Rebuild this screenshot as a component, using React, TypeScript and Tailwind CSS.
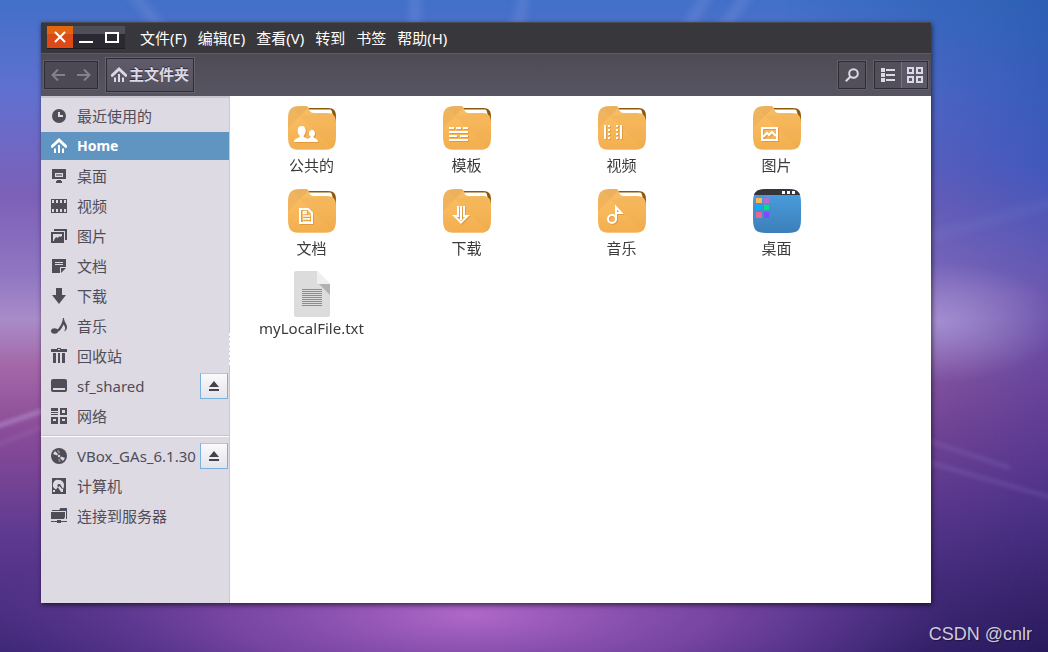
import { useState } from 'react';
import type { ReactNode } from 'react';
import clsx from 'clsx';

const menuItems = ['文件(F)', '编辑(E)', '查看(V)', '转到', '书签', '帮助(H)'];

interface Place {
  id: string;
  label: string;
  icon: ReactNode;
  ejectable?: boolean;
}

/* Sidebar icons, all drawn on a 16x16 grid */
function Glyph({ children }: { children: ReactNode }) {
  return (
    <svg viewBox="0 0 16 16" className="size-4 shrink-0" fill="currentColor" aria-hidden="true">
      {children}
    </svg>
  );
}

const HomeIcon = () => (
  <Glyph>
    <path d="M8 0 16 7.5V9.5L14.5 10 8 4 1.5 10 0 9.5V7.5Z" />
    <path d="M3 10.5h2V15H3zM7 7h2v8H7zM11 10.5h2V15h-2z" />
  </Glyph>
);

const LIGHT = '#dddae3';

const places: Place[] = [
  {
    id: 'recent',
    label: '最近使用的',
    icon: (
      <Glyph>
        <circle cx="8" cy="8" r="7" />
        <path d="M7 4h2v3h3v2H7z" fill={LIGHT} />
      </Glyph>
    ),
  },
  { id: 'home', label: 'Home', icon: <HomeIcon /> },
  {
    id: 'desktop',
    label: '桌面',
    icon: (
      <Glyph>
        <path d="M1 1h14v10H1zM6 12h4v1h1v2H5v-2h1z" />
        <path d="M4 5h8v4H4z" fill={LIGHT} />
        <path d="M5 6h6v2H5z" fill="#8d8a96" />
      </Glyph>
    ),
  },
  {
    id: 'videos',
    label: '视频',
    icon: (
      <Glyph>
        <path d="M0 1h16v14H0z" />
        <path d="M1 2h2v3H1zM5 2h2v3H5zM9 2h2v3H9zM13 2h2v3h-2zM1 11h2v3H1zM5 11h2v3H5zM9 11h2v3H9zM13 11h2v3h-2z" fill={LIGHT} />
      </Glyph>
    ),
  },
  {
    id: 'pictures',
    label: '图片',
    icon: (
      <Glyph>
        <path d="M3 1h13v11h-2V3H3z" />
        <path d="M0 4h13v11H0z" />
        <path d="M2 6h9v2L9 9 8 8 7 10 5 9 3 12v1H2z" fill={LIGHT} />
      </Glyph>
    ),
  },
  {
    id: 'documents',
    label: '文档',
    icon: (
      <Glyph>
        <path d="M1 1h14v8H9v6H1z" />
        <path d="M10 10h5l-5 5z" />
        <path d="M4 4h8v1H4zM4 6h8v1H4z" fill={LIGHT} />
      </Glyph>
    ),
  },
  {
    id: 'downloads',
    label: '下载',
    icon: (
      <Glyph>
        <path d="M5 0h6v7h4l-7 9-7-9h4z" />
      </Glyph>
    ),
  },
  {
    id: 'music',
    label: '音乐',
    icon: (
      <Glyph>
        <ellipse cx="3.5" cy="13" rx="3.6" ry="2.8" />
        <path d="M5.5 12.5C8.5 10 11.5 5 12 0h1C13 4 16 5.500 16 9c0 2-1 3.500-3 4.500 1.800-2.500 1.500-4.500-.5-7C11 10 9 13 6.500 14z" />
      </Glyph>
    ),
  },
  {
    id: 'trash',
    label: '回收站',
    icon: (
      <Glyph>
        <path d="M0 1h6V0h4v1h6v3H0zM2 5h3v10H2zM7 5h2v10H7zM11 5h3v10h-3z" />
        <path d="M7 1h2v1H7z" fill={LIGHT} />
      </Glyph>
    ),
  },
  {
    id: 'shared',
    label: 'sf_shared',
    ejectable: true,
    icon: (
      <Glyph>
        <rect y="1" width="16" height="13" rx="2" />
        <path d="M2 10h12v2H2z" fill={LIGHT} />
      </Glyph>
    ),
  },
  {
    id: 'network',
    label: '网络',
    icon: (
      <Glyph>
        <path d="M0 0h7v3H0zM0 4h7v1H0zM0 6h7v1H0z" />
        <path fillRule="evenodd" d="M9 0h7v7H9zM11 2v3h3V2zM0 9h7v7H0zM2 11v2h3v-2zM9 9h7v7H9zM11 11v2h3v-2z" />
      </Glyph>
    ),
  },
];

const devices: Place[] = [
  {
    id: 'vbox',
    label: 'VBox_GAs_6.1.30',
    ejectable: true,
    icon: (
      <Glyph>
        <circle cx="8" cy="8" r="8" />
        <path d="M2 6 4 3 7 6 6 7.500zM14 10l-2 3-3-3 1-1.500z" fill={LIGHT} />
        <path d="M6 2.500 8 2 9 5 7.500 5.500zM10 13.500 8 14 7 11l1.500-.5z" fill="#8d8a96" />
        <circle cx="8" cy="8" r="1.200" fill={LIGHT} />
      </Glyph>
    ),
  },
  {
    id: 'computer',
    label: '计算机',
    icon: (
      <Glyph>
        <path d="M1 0h14v16H1z" />
        <path d="M8 2a5 5 0 0 1 5 5c0 2-.5 3-1 4v3h-2L7 9.500 8.500 8 11 11l1 0C10 8 10 6 8 6 6 6 6 8 7 9l-2 2.500A5 5 0 0 1 8 2z" fill={LIGHT} />
        <path d="M2 12h2v2H2z" fill={LIGHT} />
      </Glyph>
    ),
  },
  {
    id: 'server',
    label: '连接到服务器',
    icon: (
      <Glyph>
        <path d="M1 2h7l1-1h7v10h-1V3H1z" />
        <path d="M9 0h7v2H9zM0 4h14v5l-1 2H0zM0 13h6v-1h4v1h6v1h-6v1H6v-1H0z" />
      </Glyph>
    ),
  },
];

const PeopleMark = (
  <path d="M13.700 20c2.600 0 4 2 4 4.700 0 2.200-.9 4-2 5v1.300c1 .9 3.300 1 4.300 2 .6-.8 1.800-1 2.600-1.400v-1c-1-.8-1.600-1.800-1.600-3.200 0-2 1.200-3.400 3-3.400s3 1.400 3 3.400c0 1.400-.6 2.400-1.500 3.200v1c1.700.9 4.500 1.300 4.500 4.400H6c0-3.400 3.800-3.700 5.700-5v-1.300c-1.100-1-2-2.800-2-5 0-2.700 1.400-4.700 4-4.700z" />
);

const TemplateMark = (
  <path d="M6 21h5v2H6zM13 21h5v2h-5zM20 21h5v2h-5zM6 25h19v2H6zM6 29h8v2H6zM17 29h8v2h-8zM6 33h19v2H6z" />
);

const VideoMark = (
  <path d="M6 19h2v14H6zM10 19h2v2h-2zM10 23h2v2h-2zM10 27h2v2h-2zM10 31h2v2h-2zM18 19h2v2h-2zM18 23h2v2h-2zM18 27h2v2h-2zM18 31h2v2h-2zM22 19h2v14h-2z" />
);

const PictureMark = (
  <g fill="none" stroke="#fff" strokeWidth="2">
    <path d="M9 22h15v12H9z" />
    <path d="m10 31 4-4 2 2 3-3 4 4" />
  </g>
);

const DocumentMark = (
  <g fill="none" stroke="#fff" strokeWidth="2">
    <path d="M12 20h8l4 4v10H12z" />
    <path d="M15 30h7M15 27h7M15 33h7" strokeWidth="1.500" />
    <path d="M15.500 22.500h2.500v2h-2.500z" strokeWidth="1.500" />
  </g>
);

const DownloadMark = (
  <g fill="none" stroke="#fff" strokeWidth="2">
    <path d="M15 17v10h-3.500l6.500 6.500 6.500-6.500H21V17" />
    <path d="M18 17v14" />
  </g>
);

const MusicMark = (
  <g fill="none" stroke="#fff" strokeWidth="2">
    <circle cx="14" cy="30" r="4" />
    <path d="M18 30V18l5.500 6H19" />
  </g>
);

function FolderIcon({ mark }: { mark: ReactNode }) {
  return (
    <svg viewBox="0 -2 48 48" className="size-12" aria-hidden="true">
      <defs>
        <linearGradient id="folder" x1="0" y1="0" x2="0" y2="1">
          <stop offset="0" stopColor="#f3bd68" />
          <stop offset=".35" stopColor="#fabb5f" />
          <stop offset="1" stopColor="#f2ae4e" />
        </linearGradient>
        <clipPath id="folder-shape">
          <path d="M0 14C0 3 3 0 13 0h4c3 0 3.500 1 4 3 .7 2.500 2 4 5 4h12c8 0 10 3 10 10v13c0 11-3 14-13 14H13C3 44 0 41 0 30z" />
        </clipPath>
      </defs>
      <path d="M20 2h20c6 0 8 3 8 9v5H20z" fill="#8f5808" />
      <path d="M20 3.500h22c2 0 2 3 3 6v4H20z" fill="#fff" />
      <g clipPath="url(#folder-shape)">
        <path d="M0 0h48v44H0z" fill="url(#folder)" />
        <path d="M0 0h2l10 10L0 22z" fill="#e3a552" opacity=".35" />
        <path d="M3 0h19l-10 10z" fill="#e3a552" opacity=".5" />
        <path d="M12 10 46 44h2V6z" fill="#e8a445" opacity=".2" />
        <path d="M0 43h48v1H0z" fill="#f8cf8c" opacity=".7" />
      </g>
      <g fill="#fff" className="drop-shadow-[1px_1px_0_rgba(200,130,40,0.5)]">
        {mark}
      </g>
    </svg>
  );
}

function DesktopIcon() {
  return (
    <svg viewBox="0 -2 48 48" className="size-12" aria-hidden="true">
      <defs>
        <linearGradient id="desk" x1="0" y1="0" x2="0" y2="1">
          <stop offset="0" stopColor="#4b9fe0" />
          <stop offset="1" stopColor="#3c7fb9" />
        </linearGradient>
        <clipPath id="desk-shape">
          <path d="M0 14C0 3 3 0 13 0h22c10 0 13 3 13 14v16c0 11-3 14-13 14H13C3 44 0 41 0 30z" />
        </clipPath>
      </defs>
      <g clipPath="url(#desk-shape)">
        <path d="M0 0h48v44H0z" fill="url(#desk)" />
        <path d="M0 0h48v6H0z" fill="#35343b" />
      </g>
      <path d="M29 2h3v3h-3zM34 2h3v3h-3zM39 2h3v3h-3z" fill="#fff" />
      <path d="M3 9h6v5H3z" fill="#fbb750" />
      <path d="M11 9h5v5h-5z" fill="#bb6bd0" />
      <path d="M3 16h6v5H3z" fill="#00b0ff" />
      <path d="M11 16h5v5h-5z" fill="#00e676" />
      <path d="M3 23h6v6H3z" fill="#f06292" />
      <path d="M11 23h5v6h-5z" fill="#7c4dff" />
    </svg>
  );
}

function TextFileIcon() {
  return (
    <svg viewBox="0 0 48 48" className="size-12" aria-hidden="true">
      <path d="M8 1h21l13 13v31a2 2 0 0 1-2 2H8a2 2 0 0 1-2-2V3a2 2 0 0 1 2-2z" fill="#dcdcdc" />
      <path d="M29 1l13 13H31a2 2 0 0 1-2-2z" fill="#efefef" />
      <path d="M31 14h11v11z" fill="#b1b1b1" />
      <path
        d="M14 19.500h20M14 21.500h20M14 23.500h20M14 25.500h20M14 27.500h20M14 29.500h20M14 31.500h20M14 33.500h20M14 35.500h20"
        stroke="#8b8b8b"
      />
    </svg>
  );
}

const files = [
  { id: 'public', name: '公共的', icon: <FolderIcon mark={PeopleMark} /> },
  { id: 'templates', name: '模板', icon: <FolderIcon mark={TemplateMark} /> },
  { id: 'videos', name: '视频', icon: <FolderIcon mark={VideoMark} /> },
  { id: 'pictures', name: '图片', icon: <FolderIcon mark={PictureMark} /> },
  { id: 'documents', name: '文档', icon: <FolderIcon mark={DocumentMark} /> },
  { id: 'downloads', name: '下载', icon: <FolderIcon mark={DownloadMark} /> },
  { id: 'music', name: '音乐', icon: <FolderIcon mark={MusicMark} /> },
  { id: 'desktop', name: '桌面', icon: <DesktopIcon /> },
  { id: 'text', name: 'myLocalFile.txt', icon: <TextFileIcon />, latin: true },
];

function Wallpaper() {
  return (
    <svg
      viewBox="0 0 1048 652"
      preserveAspectRatio="none"
      className="absolute inset-0 -z-10 size-full"
      aria-hidden="true"
    >
      <defs>
        <linearGradient id="base" x1="0" y1="0" x2="0" y2="1">
          <stop offset="0" stopColor="#4270c8" />
          <stop offset=".14" stopColor="#6070d0" />
          <stop offset=".3" stopColor="#7c60b8" />
          <stop offset=".42" stopColor="#9076c2" />
          <stop offset=".49" stopColor="#a88cc8" />
          <stop offset=".56" stopColor="#a468a8" />
          <stop offset=".66" stopColor="#8a4c98" />
          <stop offset=".82" stopColor="#5e3a90" />
          <stop offset="1" stopColor="#402878" />
        </linearGradient>
        <linearGradient id="right" x1="0" y1="0" x2="0" y2="1">
          <stop offset="0" stopColor="#2c60b4" />
          <stop offset=".25" stopColor="#4058bc" />
          <stop offset=".45" stopColor="#6c58b0" />
          <stop offset=".6" stopColor="#664298" />
          <stop offset=".75" stopColor="#50348a" />
          <stop offset="1" stopColor="#281a5c" />
        </linearGradient>
        <linearGradient id="fade" x1="0" y1="0" x2="1" y2="0">
          <stop offset=".75" stopColor="#fff" stopOpacity="0" />
          <stop offset="1" stopColor="#fff" />
        </linearGradient>
        <mask id="right-mask">
          <path d="M0 0h1048v652H0z" fill="url(#fade)" />
        </mask>
        <radialGradient id="glow">
          <stop offset="0" stopColor="#b068c8" />
          <stop offset=".5" stopColor="#8c50b2" stopOpacity=".7" />
          <stop offset="1" stopColor="#6a40a0" stopOpacity="0" />
        </radialGradient>
        <radialGradient id="horizon">
          <stop offset="0" stopColor="#b8a4e0" stopOpacity=".6" />
          <stop offset="1" stopColor="#b8a4e0" stopOpacity="0" />
        </radialGradient>
        <filter id="soft">
          <feGaussianBlur stdDeviation="2" />
        </filter>
        <filter id="softer" x="-20%" y="-20%" width="140%" height="140%">
          <feGaussianBlur stdDeviation="4" />
        </filter>
      </defs>
      <path d="M0 0h1048v652H0z" fill="url(#base)" />
      <path d="M0 0h1048v652H0z" fill="url(#right)" mask="url(#right-mask)" />
      <ellipse cx="470" cy="615" rx="480" ry="120" fill="url(#glow)" />
      <ellipse cx="940" cy="322" rx="120" ry="60" fill="url(#horizon)" />
      <g stroke="#c8b4ec" filter="url(#soft)">
        <path d="M-20 432 60 405" strokeWidth="3" opacity=".6" />
        <path d="M-20 452 60 420" strokeWidth="3" opacity=".15" />
        <path d="M920 438l90 30M920 460l140 40" strokeWidth="4" opacity=".14" />
      </g>
      <g stroke="#a8b4f0" filter="url(#softer)">
        <path d="M130-10 170 40M415-10v50M525-10l-10 50M710-10 680 40M750-10 715 40" strokeWidth="10" opacity=".2" />
        <path d="M920 240l140-40" strokeWidth="10" opacity=".08" />
      </g>
    </svg>
  );
}

function PlaceList({ items, current, onSelect }: { items: Place[]; current: string; onSelect: (id: string) => void }) {
  return (
    <ul className="flex flex-col gap-0.5">
      {items.map((place) => (
        <li
          key={place.id}
          className={clsx('flex h-7 items-center pr-px', current === place.id ? 'bg-[#6094c1] text-white' : 'text-[#504d58]')}
        >
          <button
            type="button"
            onClick={() => onSelect(place.id)}
            className={clsx(
              'flex h-full min-w-0 flex-1 items-center gap-2.5 pl-2.5 text-left whitespace-nowrap',
              current === place.id && 'text-sm font-bold'
            )}
          >
            {place.icon}
            {place.label}
          </button>
          {place.ejectable && (
            <button
              type="button"
              aria-label={`Eject ${place.label}`}
              className="flex h-[26px] w-7 shrink-0 items-center justify-center border border-[#7ab0de] border-t-[#9fcbf2] bg-linear-to-b from-[#fafafc] to-[#e4e3ea]"
            >
              <svg viewBox="0 0 10 10" className="size-2.5" fill="#45424c" aria-hidden="true">
                <path d="M5 0 10 6H0zM0 8h10v2H0z" />
              </svg>
            </button>
          )}
        </li>
      ))}
    </ul>
  );
}

export default function App() {
  const [current, setCurrent] = useState('home');
  const [view, setView] = useState<'list' | 'grid'>('grid');

  return (
    <div className="relative isolate flex min-h-screen flex-col overflow-hidden pt-[22px] pr-[117px] pb-[49px] pl-[41px] font-['Noto_Sans','Noto_Sans_CJK_SC',sans-serif] text-[15px]">
      <Wallpaper />

      <main className="flex flex-1 flex-col bg-white shadow-[1px_2px_5px_rgba(0,0,0,0.6)]">
        {/* Title bar with menus */}
        <header className="flex h-[31px] items-center gap-[15px] border-t border-[#4b4a50] bg-[#38373b] px-1.5 pb-px">
          <div className="flex h-[23px] border-b border-[#1e1d23]">
            <button type="button" aria-label="Close" className="flex w-[26px] items-center justify-center bg-linear-to-b from-[#e0660f] from-35% to-[#dd4a17] to-35%">
              <svg viewBox="0 0 12 12" className="size-3" stroke="#fff" strokeWidth="2" aria-hidden="true">
                <path d="m1 1 10 10M11 1 1 11" />
              </svg>
            </button>
            <button type="button" aria-label="Minimize" className="flex w-[26px] items-center justify-center bg-linear-to-b from-[#504e59] from-35% to-[#2a2932] to-35%">
              <svg viewBox="0 0 14 12" className="h-3 w-3.5" fill="#fff" aria-hidden="true">
                <path d="M0 10h14v2H0z" />
              </svg>
            </button>
            <button type="button" aria-label="Maximize" className="flex w-[26px] items-center justify-center bg-linear-to-b from-[#504e59] from-35% to-[#2a2932] to-35%">
              <svg viewBox="0 0 14 12" className="h-3 w-3.5" fill="none" stroke="#fff" strokeWidth="2" aria-hidden="true">
                <path d="M1 2h12v9H1z" />
              </svg>
            </button>
          </div>
          <nav className="flex gap-[11px]">
            {menuItems.map((item) => (
              <button key={item} type="button" className="leading-5 whitespace-nowrap text-white">
                {item}
              </button>
            ))}
          </nav>
        </header>

        {/* Toolbar */}
        <div className="flex h-[43px] items-center gap-1.5 border-t border-[#5c5a64] bg-linear-to-b from-[#4e4b56] to-[#585562] px-0.5 pb-px text-[#dcd9e6]">
          <div className="flex h-[30px] border border-[#615e6a] bg-[#4c4954]">
            <div className="flex border border-[#2f2d34] text-[#85808f]">
              <button type="button" aria-label="Back" className="flex w-[26px] items-center justify-center">
                <svg viewBox="0 0 14 12" className="h-3 w-3.5" fill="none" stroke="currentColor" strokeWidth="2" aria-hidden="true">
                  <path d="M14 6H2M7 .5 1.500 6 7 11.500" />
                </svg>
              </button>
              <button type="button" aria-label="Forward" className="flex w-[26px] items-center justify-center">
                <svg viewBox="0 0 14 12" className="h-3 w-3.5" fill="none" stroke="currentColor" strokeWidth="2" aria-hidden="true">
                  <path d="M0 6h12M7 .5 12.500 6 7 11.500" />
                </svg>
              </button>
            </div>
          </div>
          <div className="flex h-9 border border-[#65626e]">
            <button type="button" className="flex items-center gap-0.5 border border-[#2f2d34] bg-linear-to-b from-[#5f5b6a] to-[#565361] px-1 font-bold text-shadow-[0_-1px_0_#2f2d34]">
              <HomeIcon />
              主文件夹
            </button>
          </div>
          <div className="ml-auto flex h-[30px] border border-[#615e6a]">
            <button type="button" aria-label="Search" className="flex w-7 items-center justify-center border border-[#2f2d34] bg-[#524f5b]">
              <svg viewBox="0 0 14 14" className="size-3.5" fill="none" stroke="currentColor" strokeWidth="2" aria-hidden="true">
                <circle cx="8.500" cy="5.500" r="4.300" />
                <path d="M5.500 8.500.8 13.200" />
              </svg>
            </button>
          </div>
          <div className="flex h-[30px] border border-[#615e6a]">
            <div className="flex border border-[#2f2d34]">
              <button
                type="button"
                aria-label="List view"
                onClick={() => setView('list')}
                className={clsx('flex w-[26px] items-center justify-center', view === 'list' ? 'bg-[#5c5868]' : 'bg-[#524f5b]')}
              >
                <svg viewBox="0 0 14 14" className="size-3.5" fill="currentColor" aria-hidden="true">
                  <path d="M0 0h4v4H0zM0 5h4v4H0zM0 10h4v4H0zM5 1h9v2H5zM5 6h9v2H5zM5 11h9v2H5z" />
                </svg>
              </button>
              <button
                type="button"
                aria-label="Grid view"
                onClick={() => setView('grid')}
                className={clsx('flex w-[26px] items-center justify-center border-l border-[#77738a]', view === 'grid' ? 'bg-[#5c5868]' : 'bg-[#524f5b]')}
              >
                <svg viewBox="0 0 16 16" className="size-4" fill="none" stroke="currentColor" strokeWidth="2" aria-hidden="true">
                  <path d="M1 1h5v5H1zM10 1h5v5h-5zM1 10h5v5H1zM10 10h5v5h-5z" />
                </svg>
              </button>
            </div>
          </div>
        </div>

        <div className="flex flex-1">
          {/* Places */}
          <aside className="relative w-[189px] shrink-0 border-t-2 border-r border-t-[#c9c5d1] border-r-[#cbc8d2] bg-[#dddae3] pt-1">
            <PlaceList items={places} current={current} onSelect={setCurrent} />
            <hr className="my-[5px] h-0.5 border-t border-b border-t-[#c8c4d0] border-b-white" />
            <PlaceList items={devices} current={current} onSelect={setCurrent} />
            {/* Resize grip */}
            <span className="absolute top-[235px] -right-px h-8 border-r border-dashed border-white" />
          </aside>

          {/* Folder contents */}
          <section
            className={clsx(
              'grid flex-1 auto-rows-[83px] content-start px-1 pt-2 text-[#3b3b3b]',
              view === 'grid' ? 'grid-cols-[repeat(auto-fill,155px)]' : 'grid-cols-1 justify-items-start'
            )}
          >
            {files.map((file) => (
              <button key={file.id} type="button" className="flex w-[155px] flex-col items-center">
                {file.icon}
                <span className={file.latin ? 'leading-5' : 'leading-[26px]'}>{file.name}</span>
              </button>
            ))}
          </section>
        </div>
      </main>

      <footer className="absolute right-4 bottom-1.5 font-['Liberation_Sans',sans-serif] text-[18px] leading-6 text-[#cfcadb] text-shadow-[1px_1px_1px_#1c1440]">
        CSDN @cnlr
      </footer>
    </div>
  );
}
